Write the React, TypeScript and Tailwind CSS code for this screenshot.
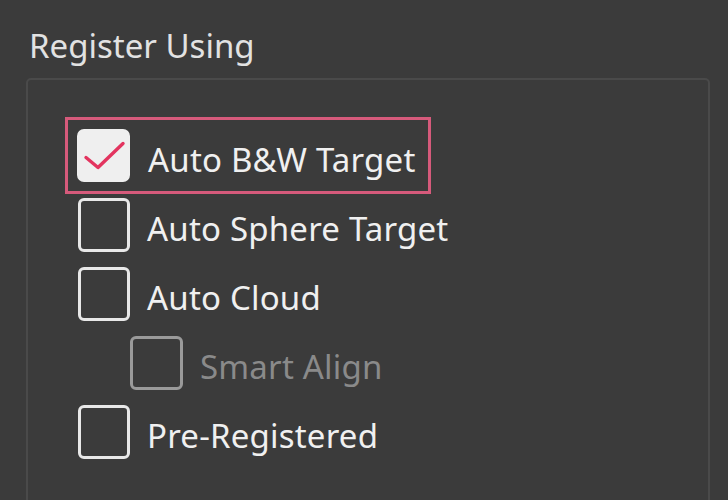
import React from 'react';

type Option = {
  label: string;
  checked?: boolean;
  disabled?: boolean;
  indent?: boolean;
};

const options: Option[] = [
  { label: 'Auto B&W Target', checked: true },
  { label: 'Auto Sphere Target' },
  { label: 'Auto Cloud' },
  { label: 'Smart Align', disabled: true, indent: true },
  { label: 'Pre-Registered' },
];

function Box({ checked, disabled }: { checked?: boolean; disabled?: boolean }) {
  if (checked) {
    return (
      <div className="w-[53px] h-[53px] shrink-0 rounded-[7px] bg-[#efefef] flex items-center justify-center">
        <svg width="53" height="53" viewBox="0 0 53 53" fill="none">
          <path
            d="M9 28.5 L21 38.5 L46 14.5"
            stroke="#e3345f"
            strokeWidth="3.4"
            strokeLinecap="round"
            strokeLinejoin="round"
          />
        </svg>
      </div>
    );
  }
  return (
    <div
      className={
        disabled
          ? 'w-[53px] h-[54px] shrink-0 rounded-[6px] border-[3px] border-[#9a9a9a]'
          : 'w-[52px] h-[54px] shrink-0 rounded-[6px] border-[3px] border-[#e8e8e8]'
      }
    />
  );
}

function Row({ option }: { option: Option }) {
  const text = (
    <span
      className={
        option.disabled
          ? 'pt-[8px] text-[33px] leading-[45px] tracking-[0.2px] text-[#8a8a8a] whitespace-nowrap'
          : 'pt-[7px] text-[33px] leading-[45px] tracking-[0.2px] text-[#f0f0f0] whitespace-nowrap'
      }
    >
      {option.label}
    </span>
  );

  if (option.checked) {
    return (
      <div className="h-[69px] flex items-center">
        <div className="ml-[37px] h-[77px] -my-[4px] flex items-center gap-[18px] pl-[9px] pr-[12px] border-[3px] border-[#d65a7b]">
          <Box checked />
          {text}
        </div>
      </div>
    );
  }

  return (
    <div
      className={
        option.indent
          ? 'h-[69px] flex items-center gap-[17px] pl-[102px]'
          : 'h-[69px] flex items-center gap-[17px] pl-[50px]'
      }
    >
      <Box disabled={option.disabled} />
      {text}
    </div>
  );
}

export default function App() {
  return (
    <div
      className="w-[728px] h-[500px] overflow-hidden bg-[#3b3b3b] pl-[26px] pr-[18px]"
      style={{ fontFamily: '"Noto Sans", "Open Sans", sans-serif' }}
    >
      <div className="pt-[23px] pl-[3px] text-[33px] leading-[45px] text-[#e2e2e2]">Register Using</div>
      <div className="mt-[10px] h-[480px] rounded-[5px] border-2 border-[#4a4a4a] pt-[41px] flex flex-col">
        {options.map((o) => (
          <Row key={o.label} option={o} />
        ))}
      </div>
    </div>
  );
}
